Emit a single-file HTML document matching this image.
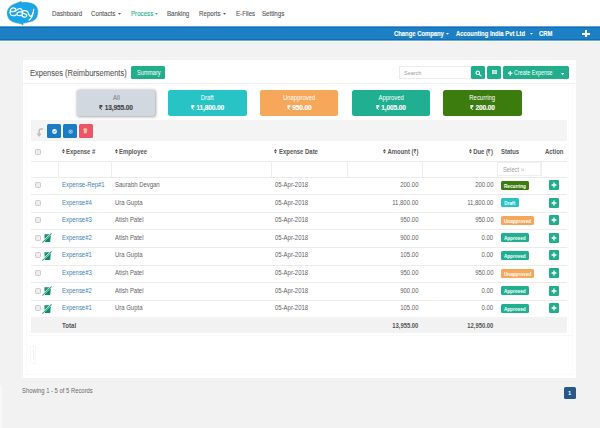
<!DOCTYPE html>
<html><head><meta charset="utf-8"><style>
*{box-sizing:border-box;margin:0;padding:0}
html,body{width:600px;height:428px;overflow:hidden}
body{position:relative;background:#f2f2f2;font-family:"Liberation Sans", sans-serif;color:#5e5e5e;font-size:6px}
.a{position:absolute;white-space:nowrap}
.t{position:absolute;white-space:nowrap;font-size:6.3px;line-height:8px;letter-spacing:-0.22px}
.b{font-weight:bold;letter-spacing:0}
.r{text-align:right}
.hl{position:absolute;left:31px;width:536px;height:1px;background:#ebebeb}
.vl{position:absolute;width:1px;background:#eeeeee}
.btn{position:absolute;background:#22ad8c;border-radius:1.5px}
.tile{position:absolute;top:90px;height:26px;border-radius:2.5px;color:#fff}
.cb{position:absolute;width:6px;height:6px;border:0.9px solid #cbcbcb;border-radius:1.4px;background:#eeeeee}
.badge{position:absolute;height:9px;border-radius:1.5px;color:#fff;font-weight:bold;font-size:4.7px;line-height:11.4px;text-align:center;letter-spacing:-0.02px}
.plus{position:absolute;width:10px;height:10px;background:#22ad8c;border-radius:1.2px}
</style></head><body>
<div class="a" style="left:0;top:0;width:600px;height:26px;background:#fff"></div>
<svg class="a" style="left:0;top:0" width="45" height="27" viewBox="0 0 45 27">
<path d="M21.1,0.95 C18,2.3 14,3.5 11.6,5.1 C8.5,7.2 6.8,10 6.85,13.3 C6.9,17 8.5,19.8 11.6,21.5 C14.5,23 18.5,23.6 21.7,24.4 L23,25.6 L23.6,23.4 C27,23.2 32,22 34.4,20.3 C37,18.5 38.2,15 38.2,11.4 C38.2,8 36.5,5.5 33.5,3.8 C30.5,2.2 26,1.7 22,2.2 Z" fill="#1aa5e8" stroke="#f2dc9c" stroke-width="0.45"/>
<g transform="translate(4,0) scale(0.0633)" fill="none" stroke="#fff" stroke-width="20" stroke-linecap="round" stroke-linejoin="round">
<path d="M100,185 C130,185 175,180 192,168 C195,135 160,118 130,128 C95,140 85,200 105,230 C125,255 170,250 192,235"/>
<path d="M205,158 C225,128 285,125 288,170 L290,248 M287,190 C250,180 200,190 205,225 C210,255 270,255 289,232"/>
<path d="M362,178 C340,160 290,165 292,195 C295,220 365,220 362,245 C360,275 310,275 288,258"/>
<path d="M372,180 C385,215 400,250 418,258 C445,250 462,200 470,150 C462,230 440,290 395,318"/>
</g></svg>
<span class="t " style="left:51.90px;top:9.61px;font-size:6.6px;color:#555;letter-spacing:0;-webkit-text-stroke:0.1px #555;transform:scaleX(0.935);transform-origin:0 0">Dashboard</span>
<span class="t " style="left:91.20px;top:9.61px;font-size:6.6px;color:#555;letter-spacing:0;-webkit-text-stroke:0.1px #555;transform:scaleX(0.935);transform-origin:0 0">Contacts</span>
<svg class="a" style="left:118.30px;top:13.00px" width="3" height="1.7" viewBox="0 0 3 1.7"><path d="M0,0H3L1.5,1.7Z" fill="#555"/></svg>
<span class="t " style="left:131.00px;top:9.61px;font-size:6.6px;color:#26a886;letter-spacing:0;-webkit-text-stroke:0.1px #26a886;transform:scaleX(0.935);transform-origin:0 0">Process</span>
<svg class="a" style="left:155.00px;top:13.00px" width="3" height="1.7" viewBox="0 0 3 1.7"><path d="M0,0H3L1.5,1.7Z" fill="#26a886"/></svg>
<span class="t " style="left:167.00px;top:9.61px;font-size:6.6px;color:#555;letter-spacing:0;-webkit-text-stroke:0.1px #555;transform:scaleX(0.935);transform-origin:0 0">Banking</span>
<span class="t " style="left:198.80px;top:9.61px;font-size:6.6px;color:#555;letter-spacing:0;-webkit-text-stroke:0.1px #555;transform:scaleX(0.935);transform-origin:0 0">Reports</span>
<svg class="a" style="left:223.30px;top:13.00px" width="3" height="1.7" viewBox="0 0 3 1.7"><path d="M0,0H3L1.5,1.7Z" fill="#555"/></svg>
<span class="t " style="left:235.50px;top:9.61px;font-size:6.6px;color:#555;letter-spacing:0;-webkit-text-stroke:0.1px #555;transform:scaleX(0.935);transform-origin:0 0">E-Files</span>
<span class="t " style="left:262.00px;top:9.61px;font-size:6.6px;color:#555;letter-spacing:0;-webkit-text-stroke:0.1px #555;transform:scaleX(0.935);transform-origin:0 0">Settings</span>
<div class="a" style="left:0;top:26px;width:600px;height:15px;background:#1d80c5;border-top:1px solid #5fa3da;border-bottom:1px solid #6aaadd"></div>
<div class="a" style="left:0;top:27px;width:600px;height:1px;background:#0f6fb8"></div>
<div class="a" style="left:0;top:39px;width:600px;height:1px;background:#0f6fb8"></div>
<div class="a" style="left:0;top:41px;width:600px;height:1px;background:#fbfbfb"></div>
<span class="t b" style="left:393.70px;top:29.91px;font-size:6.6px;color:#fff;letter-spacing:0;-webkit-text-stroke:0.1px #fff;transform:scaleX(0.89);transform-origin:0 0">Change Company</span>
<svg class="a" style="left:446.40px;top:33.10px" width="3" height="1.8" viewBox="0 0 3 1.8"><path d="M0,0H3L1.5,1.8Z" fill="#fff"/></svg>
<span class="t b" style="left:456.30px;top:29.91px;font-size:6.6px;color:#fff;letter-spacing:0;-webkit-text-stroke:0.1px #fff;transform:scaleX(0.89);transform-origin:0 0">Accounting India Pvt Ltd</span>
<svg class="a" style="left:529.70px;top:33.10px" width="3" height="1.8" viewBox="0 0 3 1.8"><path d="M0,0H3L1.5,1.8Z" fill="#fff"/></svg>
<span class="t b" style="left:538.70px;top:29.91px;font-size:6.6px;color:#fff;letter-spacing:0;-webkit-text-stroke:0.1px #fff;transform:scaleX(0.89);transform-origin:0 0">CRM</span>
<div class="a" style="left:582.2px;top:32.5px;width:7.5px;height:2px;background:#fff"></div>
<div class="a" style="left:584.95px;top:29.8px;width:2px;height:7.4px;background:#fff"></div>
<div class="a" style="left:19px;top:55.5px;width:560px;height:326px;border:1px solid #f0f0f0;background:#f3f3f3"></div>
<div class="a" style="left:22px;top:59px;width:554.5px;height:319.5px;background:#fff;border:1px solid #eff1f3"></div>
<div class="a" style="left:23px;top:83px;width:552px;height:1px;background:#eceef1"></div>
<span class="t " style="left:29.70px;top:68.89px;font-size:8.4px;letter-spacing:0;color:#5a5a5a;-webkit-text-stroke:0.1px #5a5a5a;transform:scaleX(0.895);transform-origin:0 0">Expenses (Reimbursements)</span>
<div class="btn" style="left:131.2px;top:66px;width:34px;height:13.1px"></div>
<span class="t " style="left:136.70px;top:68.98px;font-size:6.7px;color:#fff;letter-spacing:0;transform:scaleX(0.82);transform-origin:0 0">Summary</span>
<div class="a" style="left:398.7px;top:66.2px;width:72.3px;height:13.3px;border:1px solid #ececec;background:#fff"></div>
<span class="t " style="left:403.50px;top:68.89px;font-size:6.1px;color:#a0a0a0;letter-spacing:0;transform:scaleX(0.9);transform-origin:0 0">Search</span>
<div class="btn" style="left:471px;top:66.2px;width:14px;height:13px"></div>
<svg class="a" style="left:474.5px;top:70px" width="7" height="7" viewBox="0 0 7 7"><circle cx="2.8" cy="2.8" r="1.75" stroke="#fff" stroke-width="1.05" fill="none"/><path d="M4.1,4.1L5.9,5.9" stroke="#fff" stroke-width="1.3" stroke-linecap="round"/></svg>
<div class="btn" style="left:487px;top:66.2px;width:14.3px;height:13px"></div>
<svg class="a" style="left:491.8px;top:70.2px" width="5.2" height="4" viewBox="0 0 5.2 4"><rect x="0" y="0" width="5.2" height="4" fill="#d8f0ea"/><path d="M0,1.35H5.2M0,2.65H5.2M2.6,0V4" stroke="#6cc9b2" stroke-width="0.4"/></svg>
<div class="btn" style="left:503.3px;top:66.2px;width:66px;height:13px"></div>
<svg class="a" style="left:507px;top:69.5px" width="7" height="7" viewBox="0 0 7 7"><path d="M1,3.2H5.5M3.25,1V5.5" stroke="#fff" stroke-width="1.3"/></svg>
<span class="t " style="left:513.90px;top:68.82px;font-size:6.3px;color:#fff;letter-spacing:0;transform:scaleX(0.855);transform-origin:0 0">Create Expense</span>
<svg class="a" style="left:561.00px;top:72.50px" width="3.3" height="2.2" viewBox="0 0 3.3 2.2"><path d="M0,0H3.3L1.65,2.2Z" fill="#fff"/></svg>
<div class="tile" style="left:76.7px;width:78.8px;background:#d1d8e0;box-shadow:0.5px 0.5px 3px rgba(0,0,0,0.35);"></div>
<span class="t" style="left:76.7px;width:78.8px;text-align:center;top:93.9px;color:#777;font-size:6.6px;letter-spacing:0;transform:scaleX(0.9)">All</span>
<span class="t b" style="left:76.7px;width:78.8px;text-align:center;top:103.7px;color:#444;font-size:6.6px;letter-spacing:-0.15px;-webkit-text-stroke:0.12px #444"><svg style="display:inline-block;vertical-align:0px" width="3.7" height="4.7" viewBox="0 0 4 5" preserveAspectRatio="none"><path d="M0.3,0.55H3.7M0.3,1.75H3.7M1,0.55C3.1,0.55 3.1,3 1,3H0.5L3.1,4.95" stroke="#444" stroke-width="1.0" fill="none"/></svg> 13,955.00</span>
<div class="tile" style="left:168.3px;width:78.4px;background:#27c3c5;"></div>
<span class="t" style="left:168.3px;width:78.4px;text-align:center;top:93.9px;color:#fff;font-size:6.6px;letter-spacing:0;transform:scaleX(0.9)">Draft</span>
<span class="t b" style="left:168.3px;width:78.4px;text-align:center;top:103.7px;color:#fff;font-size:6.6px;letter-spacing:-0.15px;-webkit-text-stroke:0.12px #fff"><svg style="display:inline-block;vertical-align:0px" width="3.7" height="4.7" viewBox="0 0 4 5" preserveAspectRatio="none"><path d="M0.3,0.55H3.7M0.3,1.75H3.7M1,0.55C3.1,0.55 3.1,3 1,3H0.5L3.1,4.95" stroke="#fff" stroke-width="1.0" fill="none"/></svg> 11,800.00</span>
<div class="tile" style="left:260px;width:78.3px;background:#f6a75a;"></div>
<span class="t" style="left:260px;width:78.3px;text-align:center;top:93.9px;color:#fff;font-size:6.6px;letter-spacing:0;transform:scaleX(0.9)">Unapproved</span>
<span class="t b" style="left:260px;width:78.3px;text-align:center;top:103.7px;color:#fff;font-size:6.6px;letter-spacing:-0.15px;-webkit-text-stroke:0.12px #fff"><svg style="display:inline-block;vertical-align:0px" width="3.7" height="4.7" viewBox="0 0 4 5" preserveAspectRatio="none"><path d="M0.3,0.55H3.7M0.3,1.75H3.7M1,0.55C3.1,0.55 3.1,3 1,3H0.5L3.1,4.95" stroke="#fff" stroke-width="1.0" fill="none"/></svg> 950.00</span>
<div class="tile" style="left:351.7px;width:78.3px;background:#20b091;"></div>
<span class="t" style="left:351.7px;width:78.3px;text-align:center;top:93.9px;color:#fff;font-size:6.6px;letter-spacing:0;transform:scaleX(0.9)">Approved</span>
<span class="t b" style="left:351.7px;width:78.3px;text-align:center;top:103.7px;color:#fff;font-size:6.6px;letter-spacing:-0.15px;-webkit-text-stroke:0.12px #fff"><svg style="display:inline-block;vertical-align:0px" width="3.7" height="4.7" viewBox="0 0 4 5" preserveAspectRatio="none"><path d="M0.3,0.55H3.7M0.3,1.75H3.7M1,0.55C3.1,0.55 3.1,3 1,3H0.5L3.1,4.95" stroke="#fff" stroke-width="1.0" fill="none"/></svg> 1,005.00</span>
<div class="tile" style="left:443.3px;width:78.4px;background:#3c7c0f;"></div>
<span class="t" style="left:443.3px;width:78.4px;text-align:center;top:93.9px;color:#fff;font-size:6.6px;letter-spacing:0;transform:scaleX(0.9)">Recurring</span>
<span class="t b" style="left:443.3px;width:78.4px;text-align:center;top:103.7px;color:#fff;font-size:6.6px;letter-spacing:-0.15px;-webkit-text-stroke:0.12px #fff"><svg style="display:inline-block;vertical-align:0px" width="3.7" height="4.7" viewBox="0 0 4 5" preserveAspectRatio="none"><path d="M0.3,0.55H3.7M0.3,1.75H3.7M1,0.55C3.1,0.55 3.1,3 1,3H0.5L3.1,4.95" stroke="#fff" stroke-width="1.0" fill="none"/></svg> 200.00</span>
<div class="a" style="left:31px;top:120px;width:536px;height:20.6px;background:#f4f4f4"></div>
<svg class="a" style="left:36px;top:127.5px" width="8" height="9.5" viewBox="0 0 8 9.5"><path d="M7,1.1H5.3Q3.1,1.1 3.1,3.3V6.3" stroke="#bdbdbd" stroke-width="1.5" fill="none"/><path d="M0.5,5.6H5.7L3.1,9Z" fill="#bdbdbd"/></svg>
<div class="a" style="left:46.6px;top:124.4px;width:14px;height:13.4px;background:#1d7bc3;border-radius:1.5px"></div>
<div class="a" style="left:62.9px;top:124.4px;width:14px;height:13.4px;background:#1d7bc3;border-radius:1.5px"></div>
<div class="a" style="left:78.9px;top:124.4px;width:14px;height:13.4px;background:#ec5468;border-radius:1.5px"></div>
<svg class="a" style="left:51.8px;top:128.6px" width="5" height="5" viewBox="0 0 5 5"><circle cx="2.5" cy="2.5" r="2.4" fill="#fff"/><path d="M1.3,2.5L2.2,3.4L3.8,1.5" stroke="#1d7bc3" stroke-width="0.8" fill="none"/></svg>
<svg class="a" style="left:67.5px;top:128.6px" width="5.2" height="5.2" viewBox="0 0 5 5"><circle cx="2.5" cy="2.5" r="2.1" fill="#9fd0f0"/><circle cx="2.5" cy="2.5" r="1.1" fill="none" stroke="#1d7bc3" stroke-width="0.5"/></svg>
<svg class="a" style="left:83.2px;top:128.3px" width="4.6" height="5.4" viewBox="0 0 4.6 5.4"><path d="M0.2,1.3H4.4" stroke="#fbeec4" stroke-width="0.7"/><path d="M1.5,1.2V0.4H3.1V1.2" stroke="#fbeec4" stroke-width="0.5" fill="none"/><path d="M0.7,1.7H3.9L3.6,5.2H1Z" fill="#fbe9b5"/><path d="M1.75,2.2V4.7M2.85,2.2V4.7" stroke="#ec5468" stroke-width="0.45"/></svg>
<div class="hl" style="top:161px"></div>
<div class="hl" style="top:176.5px"></div>
<div class="cb" style="left:35px;top:149px"></div>
<svg class="a" style="left:61.70px;top:149.10px" width="3" height="5" viewBox="0 0 3 5"><path d="M0,2.05L1.45,0.1L2.9,2.05ZM0,2.55L1.45,4.5L2.9,2.55Z" fill="#555"/></svg>
<span class="t b" style="left:66.30px;top:148.01px;font-size:6.6px;color:#595959;letter-spacing:0;transform:scaleX(0.9);transform-origin:0 0">Expense #</span>
<svg class="a" style="left:114.70px;top:149.10px" width="3" height="5" viewBox="0 0 3 5"><path d="M0,2.05L1.45,0.1L2.9,2.05ZM0,2.55L1.45,4.5L2.9,2.55Z" fill="#555"/></svg>
<span class="t b" style="left:119.30px;top:148.01px;font-size:6.6px;color:#595959;letter-spacing:0;transform:scaleX(0.9);transform-origin:0 0">Employee</span>
<svg class="a" style="left:274.20px;top:149.10px" width="3" height="5" viewBox="0 0 3 5"><path d="M0,2.05L1.45,0.1L2.9,2.05ZM0,2.55L1.45,4.5L2.9,2.55Z" fill="#555"/></svg>
<span class="t b" style="left:278.80px;top:148.01px;font-size:6.6px;color:#595959;letter-spacing:0;transform:scaleX(0.9);transform-origin:0 0">Expense Date</span>
<svg class="a" style="left:382.60px;top:149.10px" width="3" height="5" viewBox="0 0 3 5"><path d="M0,2.05L1.45,0.1L2.9,2.05ZM0,2.55L1.45,4.5L2.9,2.55Z" fill="#555"/></svg>
<span class="t b r" style="right:181.40px;top:148.01px;font-size:6.6px;color:#595959;letter-spacing:0;transform:scaleX(0.9);transform-origin:100% 0">Amount (<svg style="display:inline-block;vertical-align:0px" width="3.3" height="4.6" viewBox="0 0 4 5" preserveAspectRatio="none"><path d="M0.3,0.55H3.7M0.3,1.75H3.7M1,0.55C3.1,0.55 3.1,3 1,3H0.5L3.1,4.95" stroke="#555" stroke-width="0.85" fill="none"/></svg>)</span>
<svg class="a" style="left:468.90px;top:149.10px" width="3" height="5" viewBox="0 0 3 5"><path d="M0,2.05L1.45,0.1L2.9,2.05ZM0,2.55L1.45,4.5L2.9,2.55Z" fill="#555"/></svg>
<span class="t b r" style="right:106.60px;top:148.01px;font-size:6.6px;color:#595959;letter-spacing:0;transform:scaleX(0.9);transform-origin:100% 0">Due (<svg style="display:inline-block;vertical-align:0px" width="3.3" height="4.6" viewBox="0 0 4 5" preserveAspectRatio="none"><path d="M0.3,0.55H3.7M0.3,1.75H3.7M1,0.55C3.1,0.55 3.1,3 1,3H0.5L3.1,4.95" stroke="#555" stroke-width="0.85" fill="none"/></svg>)</span>
<span class="t b" style="left:500.60px;top:148.01px;font-size:6.6px;color:#595959;letter-spacing:0;transform:scaleX(0.9);transform-origin:0 0">Status</span>
<span class="t b" style="left:544.80px;top:148.01px;font-size:6.6px;color:#595959;letter-spacing:0;transform:scaleX(0.9);transform-origin:0 0">Action</span>
<div class="vl" style="left:58.3px;top:161px;height:15.5px"></div>
<div class="vl" style="left:111px;top:161px;height:15.5px"></div>
<div class="vl" style="left:270.5px;top:161px;height:15.5px"></div>
<div class="vl" style="left:346.5px;top:161px;height:15.5px"></div>
<div class="vl" style="left:421.5px;top:161px;height:15.5px"></div>
<div class="vl" style="left:497px;top:161px;height:15.5px"></div>
<div class="vl" style="left:541px;top:161px;height:15.5px"></div>
<div class="a" style="left:497.3px;top:161.7px;width:43.5px;height:14.2px;border:1px solid #f0f0f0;background:#fff"></div>
<span class="t " style="left:502.50px;top:165.71px;font-size:6.6px;color:#a3a3a3;letter-spacing:0;transform:scaleX(0.88);transform-origin:0 0">Select</span>
<svg class="a" style="left:520.6px;top:167.6px" width="3.5" height="3.5" viewBox="0 0 3.5 3.5"><path d="M0.3,0.4L1.75,1.8L3.2,0.4M0.3,1.7L1.75,3.1L3.2,1.7" stroke="#aaa" stroke-width="0.55" fill="none"/></svg>
<div class="cb" style="left:35px;top:182.15px"></div>
<span class="t " style="left:61.50px;top:181.28px;font-size:6.7px;letter-spacing:0;color:#3f7fbc;transform:scaleX(0.89);transform-origin:0 0">Expense-Rep#1</span>
<span class="t " style="left:114.60px;top:181.28px;font-size:6.7px;letter-spacing:0;color:#626262;transform:scaleX(0.89);transform-origin:0 0">Saurabh Devgan</span>
<span class="t " style="left:275.00px;top:181.28px;font-size:6.7px;letter-spacing:0;color:#626262;transform:scaleX(0.89);transform-origin:0 0">05-Apr-2018</span>
<span class="t  r" style="right:181.40px;top:181.28px;font-size:6.7px;letter-spacing:0;color:#626262;transform:scaleX(0.89);transform-origin:100% 0">200.00</span>
<span class="t  r" style="right:106.60px;top:181.28px;font-size:6.7px;letter-spacing:0;color:#626262;transform:scaleX(0.89);transform-origin:100% 0">200.00</span>
<div class="badge" style="left:500.6px;top:180.65px;width:28.8px;background:#3c7c0f">Recurring</div>
<div class="plus" style="left:549.2px;top:180.15px"><svg class="a" style="left:0;top:0" width="10" height="10" viewBox="0 0 10 10"><path d="M2.6,5H7.4M5,2.6V7.4" stroke="#fff" stroke-width="1.35"/></svg></div>
<div class="hl" style="top:194.20px"></div>
<div class="cb" style="left:35px;top:199.65px"></div>
<span class="t " style="left:61.50px;top:198.78px;font-size:6.7px;letter-spacing:0;color:#3f7fbc;transform:scaleX(0.89);transform-origin:0 0">Expense#4</span>
<span class="t " style="left:114.60px;top:198.78px;font-size:6.7px;letter-spacing:0;color:#626262;transform:scaleX(0.89);transform-origin:0 0">Ura Gupta</span>
<span class="t " style="left:275.00px;top:198.78px;font-size:6.7px;letter-spacing:0;color:#626262;transform:scaleX(0.89);transform-origin:0 0">05-Apr-2018</span>
<span class="t  r" style="right:181.40px;top:198.78px;font-size:6.7px;letter-spacing:0;color:#626262;transform:scaleX(0.89);transform-origin:100% 0">11,800.00</span>
<span class="t  r" style="right:106.60px;top:198.78px;font-size:6.7px;letter-spacing:0;color:#626262;transform:scaleX(0.89);transform-origin:100% 0">11,800.00</span>
<div class="badge" style="left:500.6px;top:198.15px;width:18.4px;background:#27c3c5">Draft</div>
<div class="plus" style="left:549.2px;top:197.65px"><svg class="a" style="left:0;top:0" width="10" height="10" viewBox="0 0 10 10"><path d="M2.6,5H7.4M5,2.6V7.4" stroke="#fff" stroke-width="1.35"/></svg></div>
<div class="hl" style="top:211.80px"></div>
<div class="cb" style="left:35px;top:217.25px"></div>
<span class="t " style="left:61.50px;top:216.38px;font-size:6.7px;letter-spacing:0;color:#3f7fbc;transform:scaleX(0.89);transform-origin:0 0">Expense#3</span>
<span class="t " style="left:114.60px;top:216.38px;font-size:6.7px;letter-spacing:0;color:#626262;transform:scaleX(0.89);transform-origin:0 0">Atish Patel</span>
<span class="t " style="left:275.00px;top:216.38px;font-size:6.7px;letter-spacing:0;color:#626262;transform:scaleX(0.89);transform-origin:0 0">05-Apr-2018</span>
<span class="t  r" style="right:181.40px;top:216.38px;font-size:6.7px;letter-spacing:0;color:#626262;transform:scaleX(0.89);transform-origin:100% 0">950.00</span>
<span class="t  r" style="right:106.60px;top:216.38px;font-size:6.7px;letter-spacing:0;color:#626262;transform:scaleX(0.89);transform-origin:100% 0">950.00</span>
<div class="badge" style="left:500.6px;top:215.75px;width:33.9px;background:#f6a75a">Unapproved</div>
<div class="plus" style="left:549.2px;top:215.25px"><svg class="a" style="left:0;top:0" width="10" height="10" viewBox="0 0 10 10"><path d="M2.6,5H7.4M5,2.6V7.4" stroke="#fff" stroke-width="1.35"/></svg></div>
<div class="hl" style="top:229.30px"></div>
<div class="cb" style="left:35px;top:234.75px"></div>
<svg class="a" style="left:41.6px;top:233.25px" width="10" height="10" viewBox="0 0 10 10"><path d="M2.5,1.3H8.7V3.3L8.2,8.9H3L2.5,3.3Z" fill="#0f8b6b"/><path d="M2.9,2.6H8.3" stroke="#3fae90" stroke-width="0.35"/><path d="M-0.3,8.9L9.1,-0.5L10.3,0.7L0.9,10.1Z" fill="#fff"/><path d="M0.1,9.3L9.3,0.1L9.9,0.7L0.7,9.9Z" fill="#1aa882"/></svg>
<span class="t " style="left:61.50px;top:233.88px;font-size:6.7px;letter-spacing:0;color:#3f7fbc;transform:scaleX(0.89);transform-origin:0 0">Expense#2</span>
<span class="t " style="left:114.60px;top:233.88px;font-size:6.7px;letter-spacing:0;color:#626262;transform:scaleX(0.89);transform-origin:0 0">Atish Patel</span>
<span class="t " style="left:275.00px;top:233.88px;font-size:6.7px;letter-spacing:0;color:#626262;transform:scaleX(0.89);transform-origin:0 0">05-Apr-2018</span>
<span class="t  r" style="right:181.40px;top:233.88px;font-size:6.7px;letter-spacing:0;color:#626262;transform:scaleX(0.89);transform-origin:100% 0">900.00</span>
<span class="t  r" style="right:106.60px;top:233.88px;font-size:6.7px;letter-spacing:0;color:#626262;transform:scaleX(0.89);transform-origin:100% 0">0.00</span>
<div class="badge" style="left:500.6px;top:233.25px;width:28.3px;background:#20b091">Approved</div>
<div class="plus" style="left:549.2px;top:232.75px"><svg class="a" style="left:0;top:0" width="10" height="10" viewBox="0 0 10 10"><path d="M2.6,5H7.4M5,2.6V7.4" stroke="#fff" stroke-width="1.35"/></svg></div>
<div class="hl" style="top:246.60px"></div>
<div class="cb" style="left:35px;top:252.05px"></div>
<svg class="a" style="left:41.6px;top:250.55px" width="10" height="10" viewBox="0 0 10 10"><path d="M2.5,1.3H8.7V3.3L8.2,8.9H3L2.5,3.3Z" fill="#0f8b6b"/><path d="M2.9,2.6H8.3" stroke="#3fae90" stroke-width="0.35"/><path d="M-0.3,8.9L9.1,-0.5L10.3,0.7L0.9,10.1Z" fill="#fff"/><path d="M0.1,9.3L9.3,0.1L9.9,0.7L0.7,9.9Z" fill="#1aa882"/></svg>
<span class="t " style="left:61.50px;top:251.18px;font-size:6.7px;letter-spacing:0;color:#3f7fbc;transform:scaleX(0.89);transform-origin:0 0">Expense#1</span>
<span class="t " style="left:114.60px;top:251.18px;font-size:6.7px;letter-spacing:0;color:#626262;transform:scaleX(0.89);transform-origin:0 0">Ura Gupta</span>
<span class="t " style="left:275.00px;top:251.18px;font-size:6.7px;letter-spacing:0;color:#626262;transform:scaleX(0.89);transform-origin:0 0">05-Apr-2018</span>
<span class="t  r" style="right:181.40px;top:251.18px;font-size:6.7px;letter-spacing:0;color:#626262;transform:scaleX(0.89);transform-origin:100% 0">105.00</span>
<span class="t  r" style="right:106.60px;top:251.18px;font-size:6.7px;letter-spacing:0;color:#626262;transform:scaleX(0.89);transform-origin:100% 0">0.00</span>
<div class="badge" style="left:500.6px;top:250.55px;width:28.3px;background:#20b091">Approved</div>
<div class="plus" style="left:549.2px;top:250.05px"><svg class="a" style="left:0;top:0" width="10" height="10" viewBox="0 0 10 10"><path d="M2.6,5H7.4M5,2.6V7.4" stroke="#fff" stroke-width="1.35"/></svg></div>
<div class="hl" style="top:264.60px"></div>
<div class="cb" style="left:35px;top:270.05px"></div>
<span class="t " style="left:61.50px;top:269.18px;font-size:6.7px;letter-spacing:0;color:#3f7fbc;transform:scaleX(0.89);transform-origin:0 0">Expense#3</span>
<span class="t " style="left:114.60px;top:269.18px;font-size:6.7px;letter-spacing:0;color:#626262;transform:scaleX(0.89);transform-origin:0 0">Atish Patel</span>
<span class="t " style="left:275.00px;top:269.18px;font-size:6.7px;letter-spacing:0;color:#626262;transform:scaleX(0.89);transform-origin:0 0">05-Apr-2018</span>
<span class="t  r" style="right:181.40px;top:269.18px;font-size:6.7px;letter-spacing:0;color:#626262;transform:scaleX(0.89);transform-origin:100% 0">950.00</span>
<span class="t  r" style="right:106.60px;top:269.18px;font-size:6.7px;letter-spacing:0;color:#626262;transform:scaleX(0.89);transform-origin:100% 0">950.00</span>
<div class="badge" style="left:500.6px;top:268.55px;width:33.9px;background:#f6a75a">Unapproved</div>
<div class="plus" style="left:549.2px;top:268.05px"><svg class="a" style="left:0;top:0" width="10" height="10" viewBox="0 0 10 10"><path d="M2.6,5H7.4M5,2.6V7.4" stroke="#fff" stroke-width="1.35"/></svg></div>
<div class="hl" style="top:282.10px"></div>
<div class="cb" style="left:35px;top:287.55px"></div>
<svg class="a" style="left:41.6px;top:286.05px" width="10" height="10" viewBox="0 0 10 10"><path d="M2.5,1.3H8.7V3.3L8.2,8.9H3L2.5,3.3Z" fill="#0f8b6b"/><path d="M2.9,2.6H8.3" stroke="#3fae90" stroke-width="0.35"/><path d="M-0.3,8.9L9.1,-0.5L10.3,0.7L0.9,10.1Z" fill="#fff"/><path d="M0.1,9.3L9.3,0.1L9.9,0.7L0.7,9.9Z" fill="#1aa882"/></svg>
<span class="t " style="left:61.50px;top:286.68px;font-size:6.7px;letter-spacing:0;color:#3f7fbc;transform:scaleX(0.89);transform-origin:0 0">Expense#2</span>
<span class="t " style="left:114.60px;top:286.68px;font-size:6.7px;letter-spacing:0;color:#626262;transform:scaleX(0.89);transform-origin:0 0">Atish Patel</span>
<span class="t " style="left:275.00px;top:286.68px;font-size:6.7px;letter-spacing:0;color:#626262;transform:scaleX(0.89);transform-origin:0 0">05-Apr-2018</span>
<span class="t  r" style="right:181.40px;top:286.68px;font-size:6.7px;letter-spacing:0;color:#626262;transform:scaleX(0.89);transform-origin:100% 0">900.00</span>
<span class="t  r" style="right:106.60px;top:286.68px;font-size:6.7px;letter-spacing:0;color:#626262;transform:scaleX(0.89);transform-origin:100% 0">0.00</span>
<div class="badge" style="left:500.6px;top:286.05px;width:28.3px;background:#20b091">Approved</div>
<div class="plus" style="left:549.2px;top:285.55px"><svg class="a" style="left:0;top:0" width="10" height="10" viewBox="0 0 10 10"><path d="M2.6,5H7.4M5,2.6V7.4" stroke="#fff" stroke-width="1.35"/></svg></div>
<div class="hl" style="top:299.70px"></div>
<div class="cb" style="left:35px;top:305.15px"></div>
<svg class="a" style="left:41.6px;top:303.65px" width="10" height="10" viewBox="0 0 10 10"><path d="M2.5,1.3H8.7V3.3L8.2,8.9H3L2.5,3.3Z" fill="#0f8b6b"/><path d="M2.9,2.6H8.3" stroke="#3fae90" stroke-width="0.35"/><path d="M-0.3,8.9L9.1,-0.5L10.3,0.7L0.9,10.1Z" fill="#fff"/><path d="M0.1,9.3L9.3,0.1L9.9,0.7L0.7,9.9Z" fill="#1aa882"/></svg>
<span class="t " style="left:61.50px;top:304.28px;font-size:6.7px;letter-spacing:0;color:#3f7fbc;transform:scaleX(0.89);transform-origin:0 0">Expense#1</span>
<span class="t " style="left:114.60px;top:304.28px;font-size:6.7px;letter-spacing:0;color:#626262;transform:scaleX(0.89);transform-origin:0 0">Ura Gupta</span>
<span class="t " style="left:275.00px;top:304.28px;font-size:6.7px;letter-spacing:0;color:#626262;transform:scaleX(0.89);transform-origin:0 0">05-Apr-2018</span>
<span class="t  r" style="right:181.40px;top:304.28px;font-size:6.7px;letter-spacing:0;color:#626262;transform:scaleX(0.89);transform-origin:100% 0">105.00</span>
<span class="t  r" style="right:106.60px;top:304.28px;font-size:6.7px;letter-spacing:0;color:#626262;transform:scaleX(0.89);transform-origin:100% 0">0.00</span>
<div class="badge" style="left:500.6px;top:303.65px;width:28.3px;background:#20b091">Approved</div>
<div class="plus" style="left:549.2px;top:303.15px"><svg class="a" style="left:0;top:0" width="10" height="10" viewBox="0 0 10 10"><path d="M2.6,5H7.4M5,2.6V7.4" stroke="#fff" stroke-width="1.35"/></svg></div>
<div class="hl" style="top:316.70px"></div>
<div class="a" style="left:31px;top:316.7px;width:536px;height:16px;background:#f2f2f2"></div>
<span class="t b" style="left:61.70px;top:321.88px;font-size:6.7px;color:#555;letter-spacing:0;transform:scaleX(0.92);transform-origin:0 0">Total</span>
<span class="t b r" style="right:181.40px;top:321.91px;font-size:6.6px;color:#555;letter-spacing:0;transform:scaleX(0.89);transform-origin:100% 0">13,955.00</span>
<span class="t b r" style="right:106.60px;top:321.91px;font-size:6.6px;color:#555;letter-spacing:0;transform:scaleX(0.89);transform-origin:100% 0">12,950.00</span>
<div class="a" style="left:26px;top:85px;width:547px;height:290px;border:1px solid #fafafa"></div>
<div class="a" style="left:28px;top:334.5px;width:545px;height:1px;background:#f9f9f9"></div>
<div class="a" style="left:30px;top:346px;width:6px;height:17.5px;border:1px solid #f7f7f7"></div>
<div class="a" style="left:32.5px;top:349px;width:1px;height:11px;background:#f0f0f0"></div>
<div class="a" style="left:0;top:385px;width:2px;height:43px;background:#f8f8f8"></div>
<span class="t " style="left:22.40px;top:386.91px;font-size:6.6px;color:#6a6a6a;letter-spacing:0;transform:scaleX(0.89);transform-origin:0 0">Showing 1 - 5 of 5 Records</span>
<div class="a" style="left:563.5px;top:387px;width:12.5px;height:12px;background:#285888;border-radius:1.5px"></div>
<span class="t b" style="left:568.00px;top:389.29px;font-size:5.8px;color:#fff">1</span>
</body></html>
